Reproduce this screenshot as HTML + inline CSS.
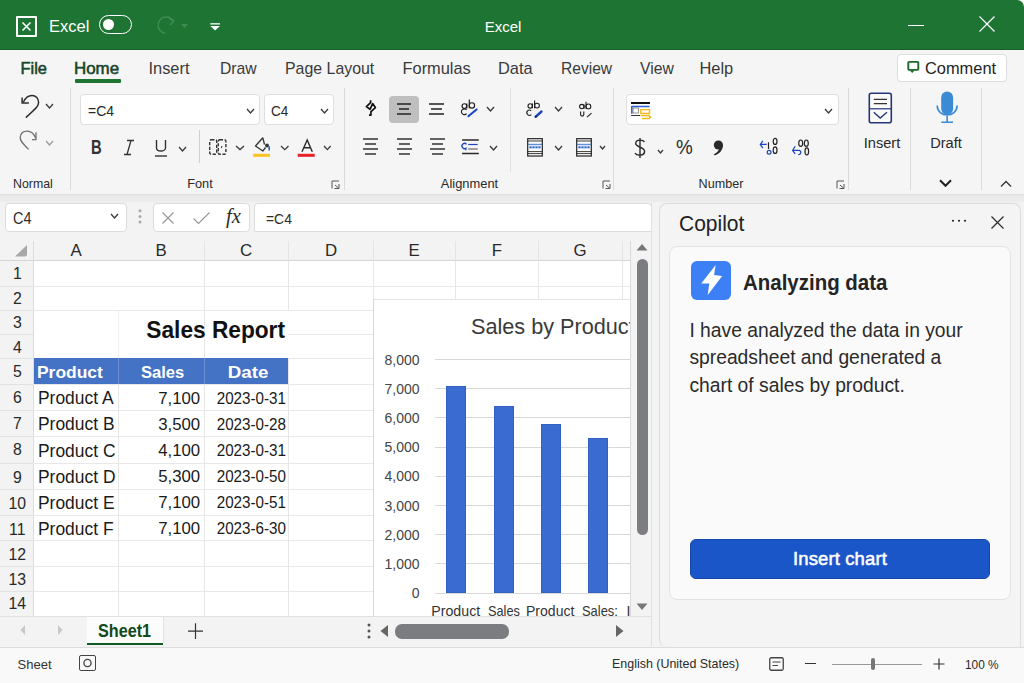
<!DOCTYPE html><html><head><meta charset="utf-8"><style>
html,body{margin:0;padding:0;width:1024px;height:683px;overflow:hidden;background:#fff;font-family:"Liberation Sans", sans-serif;}
.t{position:absolute;white-space:nowrap;-webkit-font-smoothing:antialiased;}
.b{position:absolute;}
</style></head><body>
<div class="b" style="left:0px;top:0px;width:1024px;height:50px;background:#1e7533;border-top-right-radius:7px;"></div>
<div class="b" style="left:0px;top:49px;width:1024px;height:1px;background:#17602a;"></div>
<div class="b" style="left:16px;top:16px;width:21px;height:21px;border:2px solid #fff;box-sizing:border-box;border-radius:1px;"></div>
<svg class="b" style="left:16px;top:16px;" width="21" height="21" viewBox="0 0 21 21"><path d="M6.5 6.5 L14.5 14.5 M14.5 6.5 L6.5 14.5" stroke="#fff" stroke-width="1.6"/></svg>
<div class="t" style="left:48.6px;top:17.94px;font-size:17.2px;line-height:17.2px;color:#fff;transform:scaleX(0.96);transform-origin:left center;">Excel</div>
<div class="b" style="left:99px;top:15px;width:33px;height:19px;border:1.5px solid #fff;box-sizing:border-box;border-radius:10px;"></div>
<div class="b" style="left:103px;top:19px;width:11px;height:11px;background:#fff;border-radius:50%;"></div>
<svg class="b" style="left:155px;top:15px;" width="36" height="22" viewBox="0 0 36 22"><path d="M18 6 A8 8 0 1 0 10 18" fill="none" stroke="#3f8a55" stroke-width="1.5"/><path d="M14 3 L19 6 L15 10" fill="none" stroke="#3f8a55" stroke-width="1.5"/><path d="M26 9 L33 9 L29.5 13 Z" fill="#3f8a55"/></svg>
<svg class="b" style="left:209px;top:22px;" width="12" height="10" viewBox="0 0 12 10"><rect x="1.3" y="1.2" width="9.6" height="1.3" fill="#fff"/><path d="M1.3 4 L10.9 4 L6.1 8.6 Z" fill="#fff"/></svg>
<div class="t" style="left:203px;width:600px;text-align:center;top:18.60px;font-size:15px;line-height:15px;color:#fff;">Excel</div>
<div class="b" style="left:908px;top:24.5px;width:16px;height:1.3px;background:#fff;"></div>
<svg class="b" style="left:979px;top:16px;" width="16" height="16" viewBox="0 0 16 16"><path d="M0.5 0.5 L15.5 15.5 M15.5 0.5 L0.5 15.5" stroke="#fff" stroke-width="1.2"/></svg>
<div class="b" style="left:0px;top:50px;width:1024px;height:144px;background:#f5f5f5;"></div>
<div class="b" style="left:0px;top:194px;width:1024px;height:9px;background:linear-gradient(#dedede,#e9e9e9 2px,#ebebeb 7px,#f0f0f0 8px);"></div>
<div class="t" style="left:20.5px;top:60.42px;font-size:16.4px;line-height:16.4px;color:#17452a;-webkit-text-stroke:0.55px #17452a;">File</div>
<div class="t" style="left:74px;top:60.42px;font-size:16.4px;line-height:16.4px;color:#17452a;transform:scaleX(1.03);transform-origin:left center;-webkit-text-stroke:0.55px #17452a;">Home</div>
<div class="t" style="left:148.5px;top:60.42px;font-size:16.4px;line-height:16.4px;color:#3a3a3a;">Insert</div>
<div class="t" style="left:220px;top:60.42px;font-size:16.4px;line-height:16.4px;color:#3a3a3a;transform:scaleX(0.96);transform-origin:left center;">Draw</div>
<div class="t" style="left:285px;top:60.42px;font-size:16.4px;line-height:16.4px;color:#3a3a3a;transform:scaleX(0.97);transform-origin:left center;">Page Layout</div>
<div class="t" style="left:402.5px;top:60.42px;font-size:16.4px;line-height:16.4px;color:#3a3a3a;">Formulas</div>
<div class="t" style="left:498px;top:60.42px;font-size:16.4px;line-height:16.4px;color:#3a3a3a;">Data</div>
<div class="t" style="left:561px;top:60.42px;font-size:16.4px;line-height:16.4px;color:#3a3a3a;transform:scaleX(0.95);transform-origin:left center;">Review</div>
<div class="t" style="left:639.5px;top:60.42px;font-size:16.4px;line-height:16.4px;color:#3a3a3a;transform:scaleX(0.96);transform-origin:left center;">View</div>
<div class="t" style="left:699.5px;top:60.42px;font-size:16.4px;line-height:16.4px;color:#3a3a3a;">Help</div>
<div class="b" style="left:75px;top:79px;width:46px;height:3.5px;background:#1e7533;border-radius:1px;"></div>
<div class="b" style="left:897px;top:54px;width:110px;height:28px;background:#fff;border:1px solid #dcdcdc;box-sizing:border-box;border-radius:4px;"></div>
<svg class="b" style="left:906px;top:60px;" width="15" height="15" viewBox="0 0 15 15"><rect x="2.3" y="1.9" width="10" height="8" rx="0.8" fill="none" stroke="#1b6a2a" stroke-width="1.9"/><path d="M3.8 10.5 L6.2 13 L8.6 10.5 Z" fill="#1b6a2a"/></svg>
<div class="t" style="left:925px;top:60.42px;font-size:16.4px;line-height:16.4px;color:#242424;">Comment</div>
<div class="b" style="left:70px;top:88px;width:1px;height:102px;background:#dadada;"></div>
<div class="b" style="left:344px;top:88px;width:1px;height:102px;background:#dadada;"></div>
<div class="b" style="left:510px;top:88px;width:1px;height:84px;background:#e0e0e0;"></div>
<div class="b" style="left:613px;top:88px;width:1px;height:102px;background:#dadada;"></div>
<div class="b" style="left:848px;top:88px;width:1px;height:102px;background:#dadada;"></div>
<div class="b" style="left:910px;top:88px;width:1px;height:102px;background:#dadada;"></div>
<div class="b" style="left:981px;top:88px;width:1px;height:102px;background:#dadada;"></div>
<svg class="b" style="left:19px;top:94px;" width="24" height="26" viewBox="0 0 24 26"><path d="M4.3 8.2 C6.5 3.5 9.5 1.5 13 1.5 C17 1.5 19.6 4.6 19.6 8.6 C19.6 11.5 18.5 13 6.8 23.6" fill="none" stroke="#2e2e2e" stroke-width="1.5"/><path d="M3.1 3.6 V9 H9.9" fill="none" stroke="#2e2e2e" stroke-width="1.5"/></svg>
<svg class="b" style="left:45px;top:102.5px;" width="9" height="6" viewBox="0 0 9 6"><path d="M1 1 L4.5 5 L8 1" fill="none" stroke="#3a3a3a" stroke-width="1.3"/></svg>
<svg class="b" style="left:19px;top:129px;" width="24" height="24" viewBox="0 0 24 24"><path d="M9.6 20.4 C3 14 1 11.5 1.2 8.5 C1.5 4.5 4.5 2.2 8.3 2.2 C11.5 2.2 14.5 4.2 16.7 9" fill="none" stroke="#6f6f6f" stroke-width="1.3"/><path d="M17 3.2 V10.6 H13" fill="none" stroke="#6f6f6f" stroke-width="1.3"/></svg>
<svg class="b" style="left:45px;top:140px;" width="9" height="6" viewBox="0 0 9 6"><path d="M1 1 L4.5 5 L8 1" fill="none" stroke="#9a9a9a" stroke-width="1.3"/></svg>
<div class="t" style="left:12.7px;top:178.33px;font-size:12.6px;line-height:12.6px;color:#2a2a2a;transform:scaleX(0.98);transform-origin:left center;">Normal</div>
<div class="b" style="left:80px;top:94px;width:180px;height:31px;background:#fff;border:1px solid #dedede;box-sizing:border-box;border-radius:4px;"></div>
<div class="t" style="left:87.5px;top:103.43px;font-size:15.2px;line-height:15.2px;color:#2a2a2a;transform:scaleX(0.92);transform-origin:left center;">=C4</div>
<svg class="b" style="left:246px;top:107.6px;" width="9" height="6" viewBox="0 0 9 6"><path d="M1 1 L4.5 5 L8 1" fill="none" stroke="#3a3a3a" stroke-width="1.3"/></svg>
<div class="b" style="left:264px;top:94px;width:70px;height:31px;background:#fff;border:1px solid #dedede;box-sizing:border-box;border-radius:4px;"></div>
<div class="t" style="left:271px;top:103.06px;font-size:15.4px;line-height:15.4px;color:#2a2a2a;transform:scaleX(0.88);transform-origin:left center;">C4</div>
<svg class="b" style="left:320px;top:107.6px;" width="9" height="6" viewBox="0 0 9 6"><path d="M1 1 L4.5 5 L8 1" fill="none" stroke="#3a3a3a" stroke-width="1.3"/></svg>
<div class="t" style="left:90.6px;top:137.79px;font-size:19.5px;line-height:19.5px;color:#333;font-weight:bold;transform:scaleX(0.76);transform-origin:left center;">B</div>
<svg class="b" style="left:122px;top:139px;" width="14" height="17" viewBox="0 0 14 17"><path d="M5 1.5 H12 M2 15.5 H9 M9 1.5 L5 15.5" fill="none" stroke="#333" stroke-width="1.3"/></svg>
<svg class="b" style="left:154px;top:139px;" width="14" height="19" viewBox="0 0 14 19"><path d="M2.5 1 V9 C2.5 13 11.5 13 11.5 9 V1" fill="none" stroke="#333" stroke-width="1.4"/><path d="M1 17 H13" stroke="#333" stroke-width="1.4"/></svg>
<svg class="b" style="left:178px;top:146px;" width="9" height="6" viewBox="0 0 9 6"><path d="M1 1 L4.5 5 L8 1" fill="none" stroke="#3a3a3a" stroke-width="1.3"/></svg>
<div class="b" style="left:199px;top:130px;width:1px;height:33px;background:#d0d0d0;"></div>
<svg class="b" style="left:208px;top:138px;" width="20" height="18" viewBox="0 0 20 18"><rect x="1.7" y="1.7" width="7" height="14.6" rx="1.5" fill="none" stroke="#333" stroke-width="1.4" stroke-dasharray="3.2 1.6"/><rect x="10.3" y="1.7" width="7.6" height="14.6" rx="1.5" fill="none" stroke="#333" stroke-width="1.4" stroke-dasharray="3.2 1.6"/><path d="M14 8 L13.3 10" stroke="#333" stroke-width="1"/></svg>
<svg class="b" style="left:234.5px;top:145.2px;" width="10" height="5.6" viewBox="0 0 10 5.6"><path d="M1 1 L5.0 4.6 L9 1" fill="none" stroke="#3a3a3a" stroke-width="1.3"/></svg>
<svg class="b" style="left:252px;top:136px;" width="20" height="22" viewBox="0 0 20 22"><path d="M10.8 1.7 L3.5 10 L10.8 15 L13.5 11.5 M10.8 1.7 L12.5 8.5" fill="none" stroke="#333" stroke-width="1.3" stroke-linejoin="round"/><circle cx="15" cy="9.5" r="1.9" fill="#333"/><path d="M17.2 10.2 V14.6" stroke="#2563c7" stroke-width="1.6"/><rect x="1.2" y="17.8" width="16.8" height="3" fill="#f7c325"/></svg>
<svg class="b" style="left:279.5px;top:145.2px;" width="9.5" height="5.6" viewBox="0 0 9.5 5.6"><path d="M1 1 L4.75 4.6 L8.5 1" fill="none" stroke="#3a3a3a" stroke-width="1.3"/></svg>
<svg class="b" style="left:296px;top:138px;" width="20" height="20" viewBox="0 0 20 20"><path d="M6 13.7 L11.2 2 L16.3 13.7 M7.8 9.8 H14.6" fill="none" stroke="#2a2a2a" stroke-width="1.4"/><rect x="1.7" y="15.8" width="17" height="3" fill="#e8202a"/></svg>
<svg class="b" style="left:323px;top:145.2px;" width="8.7" height="5.6" viewBox="0 0 8.7 5.6"><path d="M1 1 L4.35 4.6 L7.7 1" fill="none" stroke="#3a3a3a" stroke-width="1.3"/></svg>
<div class="t" style="left:-100px;width:600px;text-align:center;top:178.16px;font-size:12.8px;line-height:12.8px;color:#2a2a2a;">Font</div>
<svg class="b" style="left:331px;top:180px;" width="9" height="9" viewBox="0 0 9 9"><path d="M1 8.5 V1 H8 M8 4 V8.5 H3.5 M4 5 L7.5 8" fill="none" stroke="#555" stroke-width="1"/></svg>
<svg class="b" style="left:358px;top:95px;" width="26" height="26" viewBox="0 0 26 26"><path d="M12.6 5.2 V7.6 L8.4 11.6 L12 14.3 L14.6 8.6 L17.4 12.6 L13 16.6 L12.9 20.2 L11 20.1" fill="none" stroke="#111" stroke-width="1.7" stroke-linejoin="round"/></svg>
<div class="b" style="left:389px;top:96px;width:30px;height:27px;background:#bfbfbf;border-radius:4px;"></div>
<svg class="b" style="left:397px;top:103px;" width="14" height="12" viewBox="0 0 14 12"><path d="M0 1 H14 M2 6 H12 M0 11 H14" stroke="#222" stroke-width="1.3"/></svg>
<svg class="b" style="left:429px;top:103px;" width="15" height="12" viewBox="0 0 15 12"><path d="M0 1 H15 M2 6 H13 M0 11 H15" stroke="#222" stroke-width="1.3"/></svg>
<svg class="b" style="left:455px;top:96px;" width="30" height="26" viewBox="0 0 30 26"><g fill="none" stroke="#1e1e1e" stroke-width="1.15"><circle cx="9.4" cy="10.1" r="2.4"/><path d="M11.8 7.6 V12.6 M14.3 3.4 V12.3"/><circle cx="16.9" cy="9.4" r="2.7"/><path d="M11.5 13.8 A2.9 2.9 0 1 0 11.6 17.6"/></g><path d="M13.4 20.2 C16 17.8 19 15.6 21.6 13.4" fill="none" stroke="#1a44c0" stroke-width="2" stroke-linecap="round"/></svg>
<svg class="b" style="left:486px;top:106px;" width="9" height="6" viewBox="0 0 9 6"><path d="M1 1 L4.5 5 L8 1" fill="none" stroke="#3a3a3a" stroke-width="1.3"/></svg>
<svg class="b" style="left:363px;top:138px;" width="16" height="17" viewBox="0 0 16 17"><path d="M0 1 H15 M2 6 H13 M0 11 H15 M2 16 H13" stroke="#333" stroke-width="1.3"/></svg>
<svg class="b" style="left:397px;top:138px;" width="16" height="17" viewBox="0 0 16 17"><path d="M0 1 H15 M2 6 H13 M0 11 H15 M2 16 H13" stroke="#333" stroke-width="1.3"/></svg>
<svg class="b" style="left:430px;top:138px;" width="16" height="17" viewBox="0 0 16 17"><path d="M0 1 H15 M2 6 H13 M0 11 H15 M2 16 H13" stroke="#333" stroke-width="1.3"/></svg>
<svg class="b" style="left:456px;top:134px;" width="30" height="26" viewBox="0 0 30 26"><path d="M6.1 6.1 H22.8 M6.1 19.6 H22.8" stroke="#2a2a2a" stroke-width="1.5"/><path d="M12.2 10.5 H21.7" stroke="#1a44c0" stroke-width="1.2"/><path d="M12.2 15 H21.7" stroke="#666" stroke-width="1.2"/><path d="M10.5 10.3 A2.6 2.6 0 1 0 9.9 14.2 V16.2" fill="none" stroke="#1a44c0" stroke-width="1.3"/></svg>
<svg class="b" style="left:489px;top:145px;" width="9" height="6" viewBox="0 0 9 6"><path d="M1 1 L4.5 5 L8 1" fill="none" stroke="#3a3a3a" stroke-width="1.3"/></svg>
<div class="t" style="left:169.5px;width:600px;text-align:center;top:178.08px;font-size:12.9px;line-height:12.9px;color:#2a2a2a;">Alignment</div>
<svg class="b" style="left:602px;top:180px;" width="9" height="9" viewBox="0 0 9 9"><path d="M1 8.5 V1 H8 M8 4 V8.5 H3.5 M4 5 L7.5 8" fill="none" stroke="#555" stroke-width="1"/></svg>
<svg class="b" style="left:524px;top:98px;" width="22" height="22" viewBox="0 0 22 22"><g fill="none" stroke="#1e1e1e" stroke-width="1.1"><circle cx="6.2" cy="7.9" r="2.2"/><path d="M8.4 5.6 V10.2 M10.6 2.6 V10.2"/><circle cx="13" cy="7.6" r="2.4"/><path d="M7.2 12.8 A2.6 2.6 0 1 0 7.3 16.6"/></g><path d="M11.6 18.8 L17.5 13.5" stroke="#1a44c0" stroke-width="2.4" stroke-linecap="round"/><path d="M11.2 19.2 L12.4 18" stroke="#1e1e1e" stroke-width="1.6"/></svg>
<svg class="b" style="left:554px;top:106px;" width="9" height="6" viewBox="0 0 9 6"><path d="M1 1 L4.5 5 L8 1" fill="none" stroke="#3a3a3a" stroke-width="1.3"/></svg>
<svg class="b" style="left:576px;top:98px;" width="20" height="22" viewBox="0 0 20 22"><g fill="none" stroke="#1e1e1e" stroke-width="1.1"><circle cx="5.8" cy="8.6" r="2.2"/><path d="M8 6.4 V10.8 M10 3.8 V10.8"/><circle cx="12.4" cy="8.4" r="2.4"/><path d="M4.6 13.5 V16.5 A1.6 1.6 0 0 0 7.8 16.5 V13.5"/><path d="M11 19.2 L15.5 15.2"/></g></svg>
<svg class="b" style="left:527px;top:138px;" width="16" height="19" viewBox="0 0 16 19"><rect x="0.7" y="0.7" width="14.6" height="17.3" fill="#fff" stroke="#222" stroke-width="1.2"/><path d="M0.7 3 H15.3" stroke="#222" stroke-width="0.9"/><path d="M0.7 6.3 H15.3" stroke="#2563c7" stroke-width="0.9"/><rect x="2" y="7.3" width="12" height="3.8" fill="#c9d8f3"/><path d="M2.5 9.2 H13.5" stroke="#2563c7" stroke-width="1.6" stroke-dasharray="2 1"/><path d="M0.7 13.6 H15.3 M0.7 15.6 H15.3" stroke="#222" stroke-width="0.9"/></svg>
<svg class="b" style="left:576px;top:138px;" width="16" height="19" viewBox="0 0 16 19"><rect x="0.7" y="0.7" width="14.6" height="17.3" fill="#fff" stroke="#222" stroke-width="1.2"/><path d="M0.7 3 H15.3" stroke="#222" stroke-width="0.9"/><path d="M0.7 6.3 H15.3" stroke="#2563c7" stroke-width="0.9"/><rect x="2" y="7.3" width="12" height="3.8" fill="#c9d8f3"/><path d="M2.5 9.2 H13.5" stroke="#2563c7" stroke-width="1.6" stroke-dasharray="2 1"/><path d="M0.7 13.6 H15.3 M0.7 15.6 H15.3" stroke="#222" stroke-width="0.9"/></svg>
<svg class="b" style="left:554px;top:145px;" width="9" height="6" viewBox="0 0 9 6"><path d="M1 1 L4.5 5 L8 1" fill="none" stroke="#3a3a3a" stroke-width="1.3"/></svg>
<svg class="b" style="left:599px;top:145px;" width="7" height="5" viewBox="0 0 7 5"><path d="M1 1 L3.5 4 L6 1" fill="none" stroke="#3a3a3a" stroke-width="1.3"/></svg>
<div class="b" style="left:626px;top:94px;width:213px;height:31px;background:#fff;border:1px solid #dedede;box-sizing:border-box;border-radius:4px;"></div>
<svg class="b" style="left:625px;top:95px;" width="30" height="28" viewBox="0 0 30 28"><rect x="6" y="7" width="19" height="2" fill="#111"/><path d="M6.8 11.6 H24.6 M6.8 11 V18.8" stroke="#2f5fd0" stroke-width="1.5"/><rect x="8" y="13" width="5.5" height="5" fill="#fff" stroke="#666" stroke-width="0.7"/><rect x="15.8" y="14.6" width="8.7" height="3.8" fill="#fff" stroke="#f5b920" stroke-width="1.4"/><path d="M6 20.5 H15" stroke="#333" stroke-width="1"/><path d="M15.5 20.6 H24 L25.6 22.2 L24 23.5 H17" fill="none" stroke="#f5b920" stroke-width="1.5"/></svg>
<svg class="b" style="left:824px;top:107.6px;" width="9" height="6" viewBox="0 0 9 6"><path d="M1 1 L4.5 5 L8 1" fill="none" stroke="#3a3a3a" stroke-width="1.3"/></svg>
<svg class="b" style="left:633px;top:137px;" width="14" height="22" viewBox="0 0 14 22"><path d="M11.5 5 C10 2.5 3 2 2.7 6.3 C2.4 10.5 11.8 9.5 11.6 14.6 C11.4 19 3.5 19 2 16 M7 1 V21" fill="none" stroke="#2a2a2a" stroke-width="1.4"/></svg>
<svg class="b" style="left:657px;top:149px;" width="7" height="5" viewBox="0 0 7 5"><path d="M1 1 L3.5 4 L6 1" fill="none" stroke="#3a3a3a" stroke-width="1.3"/></svg>
<div class="t" style="left:675.5px;top:137.15px;font-size:20.5px;line-height:20.5px;color:#2a2a2a;transform:scaleX(0.92);transform-origin:left center;">%</div>
<svg class="b" style="left:711px;top:139px;" width="13" height="18" viewBox="0 0 13 18"><circle cx="7.4" cy="6" r="4.6" fill="#2a2a2a"/><path d="M11.8 6.5 C11.8 11 9 14.5 3.5 16.5 L3 15.3 C6.5 13.3 8.5 11 8.5 8" fill="#2a2a2a"/></svg>
<svg class="b" style="left:755px;top:135px;" width="60" height="25" viewBox="0 0 60 25"><g fill="none" stroke-width="1.2"><path d="M5.3 9.4 H11.7 M7.8 5.8 L5.3 9.4 L7.8 13.2" stroke="#1a44c0"/><path d="M13.5 7.3 V14" stroke="#222"/><circle cx="14.1" cy="17.3" r="1.9" stroke="#1a44c0"/><ellipse cx="20.1" cy="6.4" rx="1.9" ry="3" stroke="#222"/><ellipse cx="20.1" cy="15.2" rx="1.9" ry="3.3" stroke="#222"/><ellipse cx="45.7" cy="8.2" rx="2" ry="3.2" stroke="#222"/><ellipse cx="51.3" cy="8.2" rx="2" ry="3.2" stroke="#222"/><ellipse cx="51.8" cy="16.4" rx="1.8" ry="3.5" stroke="#222"/><path d="M40.2 11.3 L37.6 15.4 L40.2 18.8 M37.8 15.4 H44 C46.5 15.4 46.5 19.6 43.3 19.6" stroke="#1a44c0"/></g></svg>
<div class="t" style="left:421px;width:600px;text-align:center;top:178.33px;font-size:12.6px;line-height:12.6px;color:#2a2a2a;">Number</div>
<svg class="b" style="left:836px;top:180px;" width="9" height="9" viewBox="0 0 9 9"><path d="M1 8.5 V1 H8 M8 4 V8.5 H3.5 M4 5 L7.5 8" fill="none" stroke="#555" stroke-width="1"/></svg>
<svg class="b" style="left:866px;top:90px;" width="28" height="35" viewBox="0 0 28 35"><rect x="3.3" y="3.2" width="22" height="29.5" rx="2" fill="#fafafa" stroke="#24357a" stroke-width="1.6"/><path d="M7.8 9.4 H21 M7.8 13.7 H21" stroke="#333" stroke-width="1.3"/><path d="M3.3 18.8 H25.3" stroke="#24357a" stroke-width="1.2"/><path d="M7.8 22.2 L14.2 28 L21 22.2" fill="none" stroke="#24357a" stroke-width="1.4"/></svg>
<div class="t" style="left:581.5px;width:600px;text-align:center;top:134.96px;font-size:15.4px;line-height:15.4px;color:#2a2a2a;transform:scaleX(0.95);transform-origin:center center;">Insert</div>
<svg class="b" style="left:934px;top:90px;" width="26" height="34" viewBox="0 0 26 34"><rect x="7.2" y="1.5" width="11.9" height="23.2" rx="5.95" fill="#3a8ad4"/><path d="M3.2 15.5 C3.2 28 23.1 28 23.1 15.5 M13.15 26 V31.5 M7.3 32.3 H19" fill="none" stroke="#3a8ad4" stroke-width="1.6"/></svg>
<div class="t" style="left:646px;width:600px;text-align:center;top:134.96px;font-size:15.4px;line-height:15.4px;color:#2a2a2a;transform:scaleX(0.95);transform-origin:center center;">Draft</div>
<svg class="b" style="left:938px;top:178px;" width="14" height="10" viewBox="0 0 14 10"><path d="M2 2.3 L7.5 7.8 L13 2.3" fill="none" stroke="#222" stroke-width="2"/></svg>
<svg class="b" style="left:999px;top:179px;" width="14" height="10" viewBox="0 0 14 10"><path d="M2 7.5 L7 2.5 L12 7.5" fill="none" stroke="#333" stroke-width="1.3"/></svg>
<div class="b" style="left:0px;top:203px;width:1024px;height:445px;background:#f3f3f3;"></div>
<div class="b" style="left:5px;top:203px;width:122px;height:29px;background:#fff;border:1px solid #dcdcdc;box-sizing:border-box;border-radius:4px;"></div>
<div class="t" style="left:12.5px;top:209.62px;font-size:16.4px;line-height:16.4px;color:#2e2e2e;transform:scaleX(0.88);transform-origin:left center;">C4</div>
<svg class="b" style="left:110px;top:213px;" width="9" height="6" viewBox="0 0 9 6"><path d="M1 1 L4.5 5 L8 1" fill="none" stroke="#3a3a3a" stroke-width="1.3"/></svg>
<svg class="b" style="left:137px;top:208px;" width="6" height="17" viewBox="0 0 6 17"><circle cx="3" cy="2.8" r="1.5" fill="#aaa"/><circle cx="3" cy="8.5" r="1.5" fill="#aaa"/><circle cx="3" cy="14" r="1.5" fill="#aaa"/></svg>
<div class="b" style="left:153px;top:203px;width:97px;height:29px;background:#fff;border:1px solid #dcdcdc;box-sizing:border-box;border-radius:4px;"></div>
<svg class="b" style="left:160px;top:210px;" width="16" height="16" viewBox="0 0 16 16"><path d="M2.5 2.5 L13.5 13.5 M13.5 2.5 L2.5 13.5" stroke="#959595" stroke-width="1.1"/></svg>
<svg class="b" style="left:192px;top:210px;" width="19" height="16" viewBox="0 0 19 16"><path d="M1.5 8.5 L6.5 13.5 L17.5 2.5" fill="none" stroke="#959595" stroke-width="1.1"/></svg>
<div class="t" style="left:226px;top:206.15px;font-size:20.5px;line-height:20.5px;color:#2a2a2a;font-family:'Liberation Serif',serif;"><i>fx</i></div>
<div class="b" style="left:254px;top:203px;width:398px;height:29px;background:#fff;border:1px solid #dcdcdc;box-sizing:border-box;border-radius:4px 4px 0 0;"></div>
<div class="t" style="left:266.3px;top:211.67px;font-size:14.8px;line-height:14.8px;color:#2b2b2b;transform:scaleX(0.94);transform-origin:left center;">=C4</div>
<div class="b" style="left:0px;top:238px;width:651px;height:378px;background:#fff;"></div>
<div class="b" style="left:0px;top:238px;width:631px;height:23px;background:#f3f3f3;"></div>
<div class="b" style="left:0px;top:261px;width:33px;height:355px;background:#f3f3f3;"></div>
<div class="b" style="left:0px;top:260px;width:631px;height:1.2px;background:#d6d6d6;"></div>
<div class="b" style="left:33px;top:241px;width:1px;height:375px;background:#dcdcdc;"></div>
<div class="b" style="left:118px;top:310px;width:1px;height:48px;background:#efefef;"></div>
<div class="b" style="left:118px;top:358px;width:1px;height:258px;background:#e6e6e6;"></div>
<div class="b" style="left:204px;top:241px;width:1px;height:20px;background:#e4e4e4;"></div>
<div class="b" style="left:204px;top:261px;width:1px;height:355px;background:#e6e6e6;"></div>
<div class="b" style="left:288px;top:241px;width:1px;height:20px;background:#e4e4e4;"></div>
<div class="b" style="left:288px;top:261px;width:1px;height:49px;background:#e6e6e6;"></div>
<div class="b" style="left:288px;top:358px;width:1px;height:258px;background:#e6e6e6;"></div>
<div class="b" style="left:373px;top:241px;width:1px;height:20px;background:#e4e4e4;"></div>
<div class="b" style="left:373px;top:261px;width:1px;height:355px;background:#e6e6e6;"></div>
<div class="b" style="left:455px;top:241px;width:1px;height:20px;background:#e4e4e4;"></div>
<div class="b" style="left:455px;top:261px;width:1px;height:355px;background:#e6e6e6;"></div>
<div class="b" style="left:538px;top:241px;width:1px;height:20px;background:#e4e4e4;"></div>
<div class="b" style="left:538px;top:261px;width:1px;height:355px;background:#e6e6e6;"></div>
<div class="b" style="left:622px;top:241px;width:1px;height:20px;background:#e4e4e4;"></div>
<div class="b" style="left:622px;top:261px;width:1px;height:355px;background:#e6e6e6;"></div>
<div class="b" style="left:0px;top:286px;width:33px;height:1px;background:#e2e2e2;"></div>
<div class="b" style="left:33px;top:286px;width:598px;height:1px;background:#e8e8e8;"></div>
<div class="b" style="left:0px;top:310px;width:33px;height:1px;background:#e2e2e2;"></div>
<div class="b" style="left:33px;top:310px;width:598px;height:1px;background:#e8e8e8;"></div>
<div class="b" style="left:0px;top:334px;width:33px;height:1px;background:#e2e2e2;"></div>
<div class="b" style="left:288px;top:334px;width:343px;height:1px;background:#e8e8e8;"></div>
<div class="b" style="left:0px;top:358px;width:33px;height:1px;background:#e2e2e2;"></div>
<div class="b" style="left:33px;top:358px;width:598px;height:1px;background:#e8e8e8;"></div>
<div class="b" style="left:0px;top:384px;width:33px;height:1px;background:#e2e2e2;"></div>
<div class="b" style="left:33px;top:384px;width:598px;height:1px;background:#e8e8e8;"></div>
<div class="b" style="left:0px;top:410px;width:33px;height:1px;background:#e2e2e2;"></div>
<div class="b" style="left:33px;top:410px;width:598px;height:1px;background:#e8e8e8;"></div>
<div class="b" style="left:0px;top:436px;width:33px;height:1px;background:#e2e2e2;"></div>
<div class="b" style="left:33px;top:436px;width:598px;height:1px;background:#e8e8e8;"></div>
<div class="b" style="left:0px;top:463px;width:33px;height:1px;background:#e2e2e2;"></div>
<div class="b" style="left:33px;top:463px;width:598px;height:1px;background:#e8e8e8;"></div>
<div class="b" style="left:0px;top:489px;width:33px;height:1px;background:#e2e2e2;"></div>
<div class="b" style="left:33px;top:489px;width:598px;height:1px;background:#e8e8e8;"></div>
<div class="b" style="left:0px;top:515px;width:33px;height:1px;background:#e2e2e2;"></div>
<div class="b" style="left:33px;top:515px;width:598px;height:1px;background:#e8e8e8;"></div>
<div class="b" style="left:0px;top:540px;width:33px;height:1px;background:#e2e2e2;"></div>
<div class="b" style="left:33px;top:540px;width:598px;height:1px;background:#e8e8e8;"></div>
<div class="b" style="left:0px;top:566px;width:33px;height:1px;background:#e2e2e2;"></div>
<div class="b" style="left:33px;top:566px;width:598px;height:1px;background:#e8e8e8;"></div>
<div class="b" style="left:0px;top:591px;width:33px;height:1px;background:#e2e2e2;"></div>
<div class="b" style="left:33px;top:591px;width:598px;height:1px;background:#e8e8e8;"></div>
<div class="b" style="left:631px;top:238px;width:20px;height:378px;background:#f3f3f3;"></div>
<div class="b" style="left:630px;top:241px;width:1px;height:375px;background:#dadada;"></div>
<div class="t" style="left:-224.5px;width:600px;text-align:center;top:242.09px;font-size:16.2px;line-height:16.2px;color:#2a2a2a;transform:scaleX(1.04);transform-origin:center center;">A</div>
<div class="t" style="left:-139.0px;width:600px;text-align:center;top:242.09px;font-size:16.2px;line-height:16.2px;color:#2a2a2a;transform:scaleX(1.04);transform-origin:center center;">B</div>
<div class="t" style="left:-54.0px;width:600px;text-align:center;top:242.09px;font-size:16.2px;line-height:16.2px;color:#2a2a2a;transform:scaleX(1.04);transform-origin:center center;">C</div>
<div class="t" style="left:30.5px;width:600px;text-align:center;top:242.09px;font-size:16.2px;line-height:16.2px;color:#2a2a2a;transform:scaleX(1.04);transform-origin:center center;">D</div>
<div class="t" style="left:114.0px;width:600px;text-align:center;top:242.09px;font-size:16.2px;line-height:16.2px;color:#2a2a2a;transform:scaleX(1.04);transform-origin:center center;">E</div>
<div class="t" style="left:196.5px;width:600px;text-align:center;top:242.09px;font-size:16.2px;line-height:16.2px;color:#2a2a2a;transform:scaleX(1.04);transform-origin:center center;">F</div>
<div class="t" style="left:280.0px;width:600px;text-align:center;top:242.09px;font-size:16.2px;line-height:16.2px;color:#2a2a2a;transform:scaleX(1.04);transform-origin:center center;">G</div>
<div class="t" style="left:-282.7px;width:600px;text-align:center;top:266.03px;font-size:15.8px;line-height:15.8px;color:#2a2a2a;">1</div>
<div class="t" style="left:-282.7px;width:600px;text-align:center;top:291.23px;font-size:15.8px;line-height:15.8px;color:#2a2a2a;">2</div>
<div class="t" style="left:-282.7px;width:600px;text-align:center;top:315.43px;font-size:15.8px;line-height:15.8px;color:#2a2a2a;">3</div>
<div class="t" style="left:-282.7px;width:600px;text-align:center;top:339.63px;font-size:15.8px;line-height:15.8px;color:#2a2a2a;">4</div>
<div class="t" style="left:-282.7px;width:600px;text-align:center;top:363.83px;font-size:15.8px;line-height:15.8px;color:#2a2a2a;">5</div>
<div class="t" style="left:-282.7px;width:600px;text-align:center;top:390.03px;font-size:15.8px;line-height:15.8px;color:#2a2a2a;">6</div>
<div class="t" style="left:-282.7px;width:600px;text-align:center;top:416.23px;font-size:15.8px;line-height:15.8px;color:#2a2a2a;">7</div>
<div class="t" style="left:-282.7px;width:600px;text-align:center;top:442.43px;font-size:15.8px;line-height:15.8px;color:#2a2a2a;">8</div>
<div class="t" style="left:-282.7px;width:600px;text-align:center;top:469.63px;font-size:15.8px;line-height:15.8px;color:#2a2a2a;">9</div>
<div class="t" style="left:-282.7px;width:600px;text-align:center;top:495.83px;font-size:15.8px;line-height:15.8px;color:#2a2a2a;">10</div>
<div class="t" style="left:-282.7px;width:600px;text-align:center;top:522.03px;font-size:15.8px;line-height:15.8px;color:#2a2a2a;">11</div>
<div class="t" style="left:-282.7px;width:600px;text-align:center;top:547.23px;font-size:15.8px;line-height:15.8px;color:#2a2a2a;">12</div>
<div class="t" style="left:-282.7px;width:600px;text-align:center;top:572.13px;font-size:15.8px;line-height:15.8px;color:#2a2a2a;">13</div>
<div class="t" style="left:-282.7px;width:600px;text-align:center;top:596.23px;font-size:15.8px;line-height:15.8px;color:#2a2a2a;">14</div>
<svg class="b" style="left:14px;top:244px;" width="14" height="13" viewBox="0 0 14 13"><path d="M13 1 V10.5 Q13 12.5 11 12.5 H1 Z" fill="#a8a8a8"/></svg>
<div class="t" style="left:-315.2px;width:600px;text-align:right;top:318.28px;font-size:24px;line-height:24px;color:#111;font-weight:bold;transform:scaleX(0.945);transform-origin:right center;">Sales Report</div>
<div class="b" style="left:34px;top:358px;width:254px;height:26px;background:#4472c4;"></div>
<div class="b" style="left:118px;top:358px;width:1px;height:26px;background:#6b8fd0;"></div>
<div class="b" style="left:204px;top:358px;width:1px;height:26px;background:#6b8fd0;"></div>
<div class="t" style="left:36.6px;top:364.75px;font-size:16.6px;line-height:16.6px;color:#fff;font-weight:bold;transform:scaleX(1.05);transform-origin:left center;">Product</div>
<div class="t" style="left:-137.4px;width:600px;text-align:center;top:364.75px;font-size:16.6px;line-height:16.6px;color:#fff;font-weight:bold;">Sales</div>
<div class="t" style="left:-52.400000000000006px;width:600px;text-align:center;top:364.75px;font-size:16.6px;line-height:16.6px;color:#fff;font-weight:bold;transform:scaleX(1.13);transform-origin:center center;">Date</div>
<div class="t" style="left:37.5px;top:390.02px;font-size:17.7px;line-height:17.7px;color:#1a1a1a;transform:scaleX(0.985);transform-origin:left center;">Product A</div>
<div class="t" style="left:-399.8px;width:600px;text-align:right;top:390.78px;font-size:16.8px;line-height:16.8px;color:#1a1a1a;">7,100</div>
<div class="t" style="left:-314.4px;width:600px;text-align:right;top:390.78px;font-size:16.8px;line-height:16.8px;color:#1a1a1a;transform:scaleX(0.906);transform-origin:right center;">2023-0-31</div>
<div class="t" style="left:37.5px;top:416.22px;font-size:17.7px;line-height:17.7px;color:#1a1a1a;transform:scaleX(0.985);transform-origin:left center;">Product B</div>
<div class="t" style="left:-399.8px;width:600px;text-align:right;top:416.98px;font-size:16.8px;line-height:16.8px;color:#1a1a1a;">3,500</div>
<div class="t" style="left:-314.4px;width:600px;text-align:right;top:416.98px;font-size:16.8px;line-height:16.8px;color:#1a1a1a;transform:scaleX(0.906);transform-origin:right center;">2023-0-28</div>
<div class="t" style="left:37.5px;top:442.52px;font-size:17.7px;line-height:17.7px;color:#1a1a1a;transform:scaleX(0.985);transform-origin:left center;">Product C</div>
<div class="t" style="left:-399.8px;width:600px;text-align:right;top:443.28px;font-size:16.8px;line-height:16.8px;color:#1a1a1a;">4,100</div>
<div class="t" style="left:-314.4px;width:600px;text-align:right;top:443.28px;font-size:16.8px;line-height:16.8px;color:#1a1a1a;transform:scaleX(0.906);transform-origin:right center;">2023-0-31</div>
<div class="t" style="left:37.5px;top:468.62px;font-size:17.7px;line-height:17.7px;color:#1a1a1a;transform:scaleX(0.985);transform-origin:left center;">Product D</div>
<div class="t" style="left:-399.8px;width:600px;text-align:right;top:469.38px;font-size:16.8px;line-height:16.8px;color:#1a1a1a;">5,300</div>
<div class="t" style="left:-314.4px;width:600px;text-align:right;top:469.38px;font-size:16.8px;line-height:16.8px;color:#1a1a1a;transform:scaleX(0.906);transform-origin:right center;">2023-0-50</div>
<div class="t" style="left:37.5px;top:494.62px;font-size:17.7px;line-height:17.7px;color:#1a1a1a;transform:scaleX(0.985);transform-origin:left center;">Product E</div>
<div class="t" style="left:-399.8px;width:600px;text-align:right;top:495.38px;font-size:16.8px;line-height:16.8px;color:#1a1a1a;">7,100</div>
<div class="t" style="left:-314.4px;width:600px;text-align:right;top:495.38px;font-size:16.8px;line-height:16.8px;color:#1a1a1a;transform:scaleX(0.906);transform-origin:right center;">2023-0-51</div>
<div class="t" style="left:37.5px;top:520.62px;font-size:17.7px;line-height:17.7px;color:#1a1a1a;transform:scaleX(0.985);transform-origin:left center;">Product F</div>
<div class="t" style="left:-399.8px;width:600px;text-align:right;top:521.38px;font-size:16.8px;line-height:16.8px;color:#1a1a1a;">7,100</div>
<div class="t" style="left:-314.4px;width:600px;text-align:right;top:521.38px;font-size:16.8px;line-height:16.8px;color:#1a1a1a;transform:scaleX(0.906);transform-origin:right center;">2023-6-30</div>
<div class="b" style="left:373px;top:299px;width:257px;height:317px;background:#fff;border-left:1px solid #d8d8d8;border-top:1px solid #e4e4e4;box-sizing:border-box;overflow:hidden;"></div>
<div class="b" style="left:373px;top:299px;width:257px;height:317px;overflow:hidden;">
<div class="t" style="left:97.5px;top:16.40px;font-size:22.8px;line-height:22.8px;color:#3a3a3a;transform:scaleX(0.95);transform-origin:left center;">Sales by Product</div>
<div class="b" style="left:62px;top:294px;width:200px;height:1px;background:#d9d9d9;"></div>
<div class="t" style="left:-553.5px;width:600px;text-align:right;top:287.35px;font-size:14px;line-height:14px;color:#444;">0</div>
<div class="b" style="left:62px;top:264px;width:200px;height:1px;background:#d9d9d9;"></div>
<div class="t" style="left:-553.5px;width:600px;text-align:right;top:258.13px;font-size:14px;line-height:14px;color:#444;">1,000</div>
<div class="b" style="left:62px;top:235px;width:200px;height:1px;background:#d9d9d9;"></div>
<div class="t" style="left:-553.5px;width:600px;text-align:right;top:228.91px;font-size:14px;line-height:14px;color:#444;">2,000</div>
<div class="b" style="left:62px;top:206px;width:200px;height:1px;background:#d9d9d9;"></div>
<div class="t" style="left:-553.5px;width:600px;text-align:right;top:199.69px;font-size:14px;line-height:14px;color:#444;">3,000</div>
<div class="b" style="left:62px;top:177px;width:200px;height:1px;background:#d9d9d9;"></div>
<div class="t" style="left:-553.5px;width:600px;text-align:right;top:170.47px;font-size:14px;line-height:14px;color:#444;">4,000</div>
<div class="b" style="left:62px;top:148px;width:200px;height:1px;background:#d9d9d9;"></div>
<div class="t" style="left:-553.5px;width:600px;text-align:right;top:141.25px;font-size:14px;line-height:14px;color:#444;">5,000</div>
<div class="b" style="left:62px;top:118px;width:200px;height:1px;background:#d9d9d9;"></div>
<div class="t" style="left:-553.5px;width:600px;text-align:right;top:112.03px;font-size:14px;line-height:14px;color:#444;">6,000</div>
<div class="b" style="left:62px;top:89px;width:200px;height:1px;background:#d9d9d9;"></div>
<div class="t" style="left:-553.5px;width:600px;text-align:right;top:82.81px;font-size:14px;line-height:14px;color:#444;">7,000</div>
<div class="b" style="left:62px;top:60px;width:200px;height:1px;background:#d9d9d9;"></div>
<div class="t" style="left:-553.5px;width:600px;text-align:right;top:53.59px;font-size:14px;line-height:14px;color:#444;">8,000</div>
<div class="b" style="left:73px;top:87.39999999999998px;width:20px;height:206.30000000000007px;background:#3a6bd0;box-shadow:inset 0 0 0 0.6px #2f5cb8;"></div>
<div class="b" style="left:120.5px;top:106.69999999999999px;width:20px;height:187.00000000000006px;background:#3a6bd0;box-shadow:inset 0 0 0 0.6px #2f5cb8;"></div>
<div class="b" style="left:167.70000000000005px;top:124.60000000000002px;width:20px;height:169.10000000000002px;background:#3a6bd0;box-shadow:inset 0 0 0 0.6px #2f5cb8;"></div>
<div class="b" style="left:215px;top:138.7px;width:20px;height:155.00000000000006px;background:#3a6bd0;box-shadow:inset 0 0 0 0.6px #2f5cb8;"></div>
<div class="t" style="left:58.30000000000001px;top:304.78px;font-size:14.2px;line-height:14.2px;color:#333;">Product</div>
<div class="t" style="left:114.60000000000002px;top:304.78px;font-size:14.2px;line-height:14.2px;color:#333;transform:scaleX(0.9);transform-origin:left center;">Sales</div>
<div class="t" style="left:153.29999999999995px;top:304.78px;font-size:14.2px;line-height:14.2px;color:#333;transform:scaleX(0.99);transform-origin:left center;">Product</div>
<div class="t" style="left:208.70000000000005px;top:304.78px;font-size:14.2px;line-height:14.2px;color:#333;transform:scaleX(0.91);transform-origin:left center;">Sales:</div>
<div class="t" style="left:253.5px;top:304.78px;font-size:14.2px;line-height:14.2px;color:#333;">I</div>
</div>
<div class="b" style="left:631px;top:238px;width:20px;height:378px;background:#f3f3f3;"></div>
<svg class="b" style="left:636px;top:243px;" width="12" height="8" viewBox="0 0 12 8"><path d="M0.5 7.5 L6 1 L11.5 7.5 Z" fill="#777"/></svg>
<div class="b" style="left:636.5px;top:259px;width:11.5px;height:276px;background:#7b7d80;border-radius:6px;"></div>
<svg class="b" style="left:636px;top:603px;" width="12" height="8" viewBox="0 0 12 8"><path d="M0.5 0.5 L6 7 L11.5 0.5 Z" fill="#777"/></svg>
<div class="b" style="left:651px;top:203px;width:1px;height:443px;background:#e0e0e0;"></div>
<div class="b" style="left:0px;top:616px;width:651px;height:31px;background:#f3f3f3;"></div>
<div class="b" style="left:0px;top:616px;width:651px;height:1px;background:#e0e0e0;"></div>
<svg class="b" style="left:19px;top:624px;" width="8" height="12" viewBox="0 0 8 12"><path d="M6 1 L1.5 6 L6 11 Z" fill="#c8c8c8"/></svg>
<svg class="b" style="left:56px;top:624px;" width="8" height="12" viewBox="0 0 8 12"><path d="M2 1 L6.5 6 L2 11 Z" fill="#c8c8c8"/></svg>
<div class="b" style="left:87px;top:617px;width:76px;height:26px;background:#fcfcfc;border-right:1px solid #e2e2e2;"></div>
<div class="t" style="left:97.7px;top:622.79px;font-size:17.5px;line-height:17.5px;color:#0f4a20;font-weight:bold;transform:scaleX(0.925);transform-origin:left center;">Sheet1</div>
<div class="b" style="left:87px;top:642.7px;width:76px;height:2.2px;background:#0f5a25;"></div>
<svg class="b" style="left:187px;top:622px;" width="17" height="18" viewBox="0 0 17 18"><path d="M8.5 1.3 V17 M1 9.2 H16" stroke="#333" stroke-width="1.2"/></svg>
<svg class="b" style="left:366px;top:622px;" width="6" height="18" viewBox="0 0 6 18"><circle cx="3" cy="3" r="1.5" fill="#555"/><circle cx="3" cy="9" r="1.5" fill="#555"/><circle cx="3" cy="15" r="1.5" fill="#555"/></svg>
<svg class="b" style="left:379px;top:624px;" width="10" height="14" viewBox="0 0 10 14"><path d="M9 1 L1.5 7 L9 13 Z" fill="#666"/></svg>
<div class="b" style="left:395px;top:624px;width:114px;height:14.5px;background:#7b7d80;border-radius:7px;"></div>
<svg class="b" style="left:615px;top:624px;" width="10" height="14" viewBox="0 0 10 14"><path d="M1 1 L8.5 7 L1 13 Z" fill="#666"/></svg>
<div class="b" style="left:0px;top:647px;width:1024px;height:36px;background:#f9f9f9;"></div>
<div class="b" style="left:0px;top:647px;width:1024px;height:1px;background:#dddddd;"></div>
<div class="t" style="left:17.6px;top:657.80px;font-size:13px;line-height:13px;color:#333;">Sheet</div>
<div class="b" style="left:79px;top:655px;width:17px;height:16px;border:1.3px solid #444;box-sizing:border-box;border-radius:2px;"></div>
<svg class="b" style="left:79px;top:655px;" width="17" height="16" viewBox="0 0 17 16"><circle cx="8.5" cy="8" r="3.6" fill="none" stroke="#444" stroke-width="1.3"/></svg>
<div class="t" style="left:612px;top:658.38px;font-size:12.9px;line-height:12.9px;color:#2a2a2a;transform:scaleX(0.965);transform-origin:left center;">English (United States)</div>
<svg class="b" style="left:769px;top:657px;" width="15" height="14" viewBox="0 0 15 14"><rect x="0.75" y="0.75" width="13.5" height="12.5" rx="1.5" fill="none" stroke="#444" stroke-width="1.3"/><path d="M3.5 5 H11.5 M3.5 8.5 H9" stroke="#444" stroke-width="1.2"/></svg>
<div class="b" style="left:804.5px;top:663.2px;width:11.5px;height:1.3px;background:#333;"></div>
<div class="b" style="left:832px;top:663.5px;width:90px;height:1px;background:#999;"></div>
<div class="b" style="left:870.5px;top:657.5px;width:4.5px;height:12.5px;background:#777;border-radius:2px;"></div>
<svg class="b" style="left:933px;top:658px;" width="12" height="12" viewBox="0 0 12 12"><path d="M6 0.5 V11.5 M0.5 6 H11.5" stroke="#333" stroke-width="1.2"/></svg>
<div class="t" style="left:964.5px;top:658.13px;font-size:13.2px;line-height:13.2px;color:#2a2a2a;transform:scaleX(0.9);transform-origin:left center;">100 %</div>
<div class="b" style="left:659px;top:203px;width:362px;height:444px;background:#f4f4f4;border:1px solid #dcdcdc;border-bottom:none;box-sizing:border-box;border-radius:8px 8px 0 8px;"></div>
<div class="t" style="left:679px;top:213.97px;font-size:21.3px;line-height:21.3px;color:#222;transform:scaleX(0.985);transform-origin:left center;">Copilot</div>
<svg class="b" style="left:951px;top:218px;" width="16" height="6" viewBox="0 0 16 6"><circle cx="2" cy="2.8" r="1.05" fill="#222"/><circle cx="8" cy="2.8" r="1.05" fill="#222"/><circle cx="14" cy="2.8" r="1.05" fill="#222"/></svg>
<svg class="b" style="left:990px;top:215px;" width="15" height="15" viewBox="0 0 15 15"><path d="M1.5 1.5 L13.5 13.5 M13.5 1.5 L1.5 13.5" stroke="#2a2a2a" stroke-width="1.15"/></svg>
<div class="b" style="left:669px;top:246px;width:342px;height:354px;background:#fafafa;border:1px solid #e2e2e2;box-sizing:border-box;border-radius:8px;"></div>
<div class="b" style="left:691px;top:261px;width:40px;height:39px;background:#3d80f5;border-radius:6px;"></div>
<svg class="b" style="left:691px;top:261px;" width="40" height="39" viewBox="0 0 40 39"><path d="M24.7 4.1 L23.1 14.1 L31.2 15 L16.7 34 L18.3 22.5 L10.2 22.5 Z" fill="#fff"/></svg>
<div class="t" style="left:743px;top:271.58px;font-size:22px;line-height:22px;color:#242424;font-weight:bold;transform:scaleX(0.93);transform-origin:left center;">Analyzing data</div>
<div class="t" style="left:689.4px;top:320.66px;font-size:19.3px;line-height:19.3px;color:#2a2a2a;">I have analyzed the data in your</div>
<div class="t" style="left:689.4px;top:348.46px;font-size:19.3px;line-height:19.3px;color:#2a2a2a;">spreadsheet and generated a</div>
<div class="t" style="left:689.4px;top:376.06px;font-size:19.3px;line-height:19.3px;color:#2a2a2a;">chart of sales by product.</div>
<div class="b" style="left:690px;top:538.5px;width:300px;height:40px;background:#1b56c8;border-radius:6px;border:1px solid #1546a8;box-sizing:border-box;"></div>
<div class="t" style="left:539.5px;width:600px;text-align:center;top:549.32px;font-size:19px;line-height:19px;color:#fff;letter-spacing:0.15px;transform:scaleX(0.97);transform-origin:center center;-webkit-text-stroke:0.55px #fff;">Insert chart</div>
</body></html>
